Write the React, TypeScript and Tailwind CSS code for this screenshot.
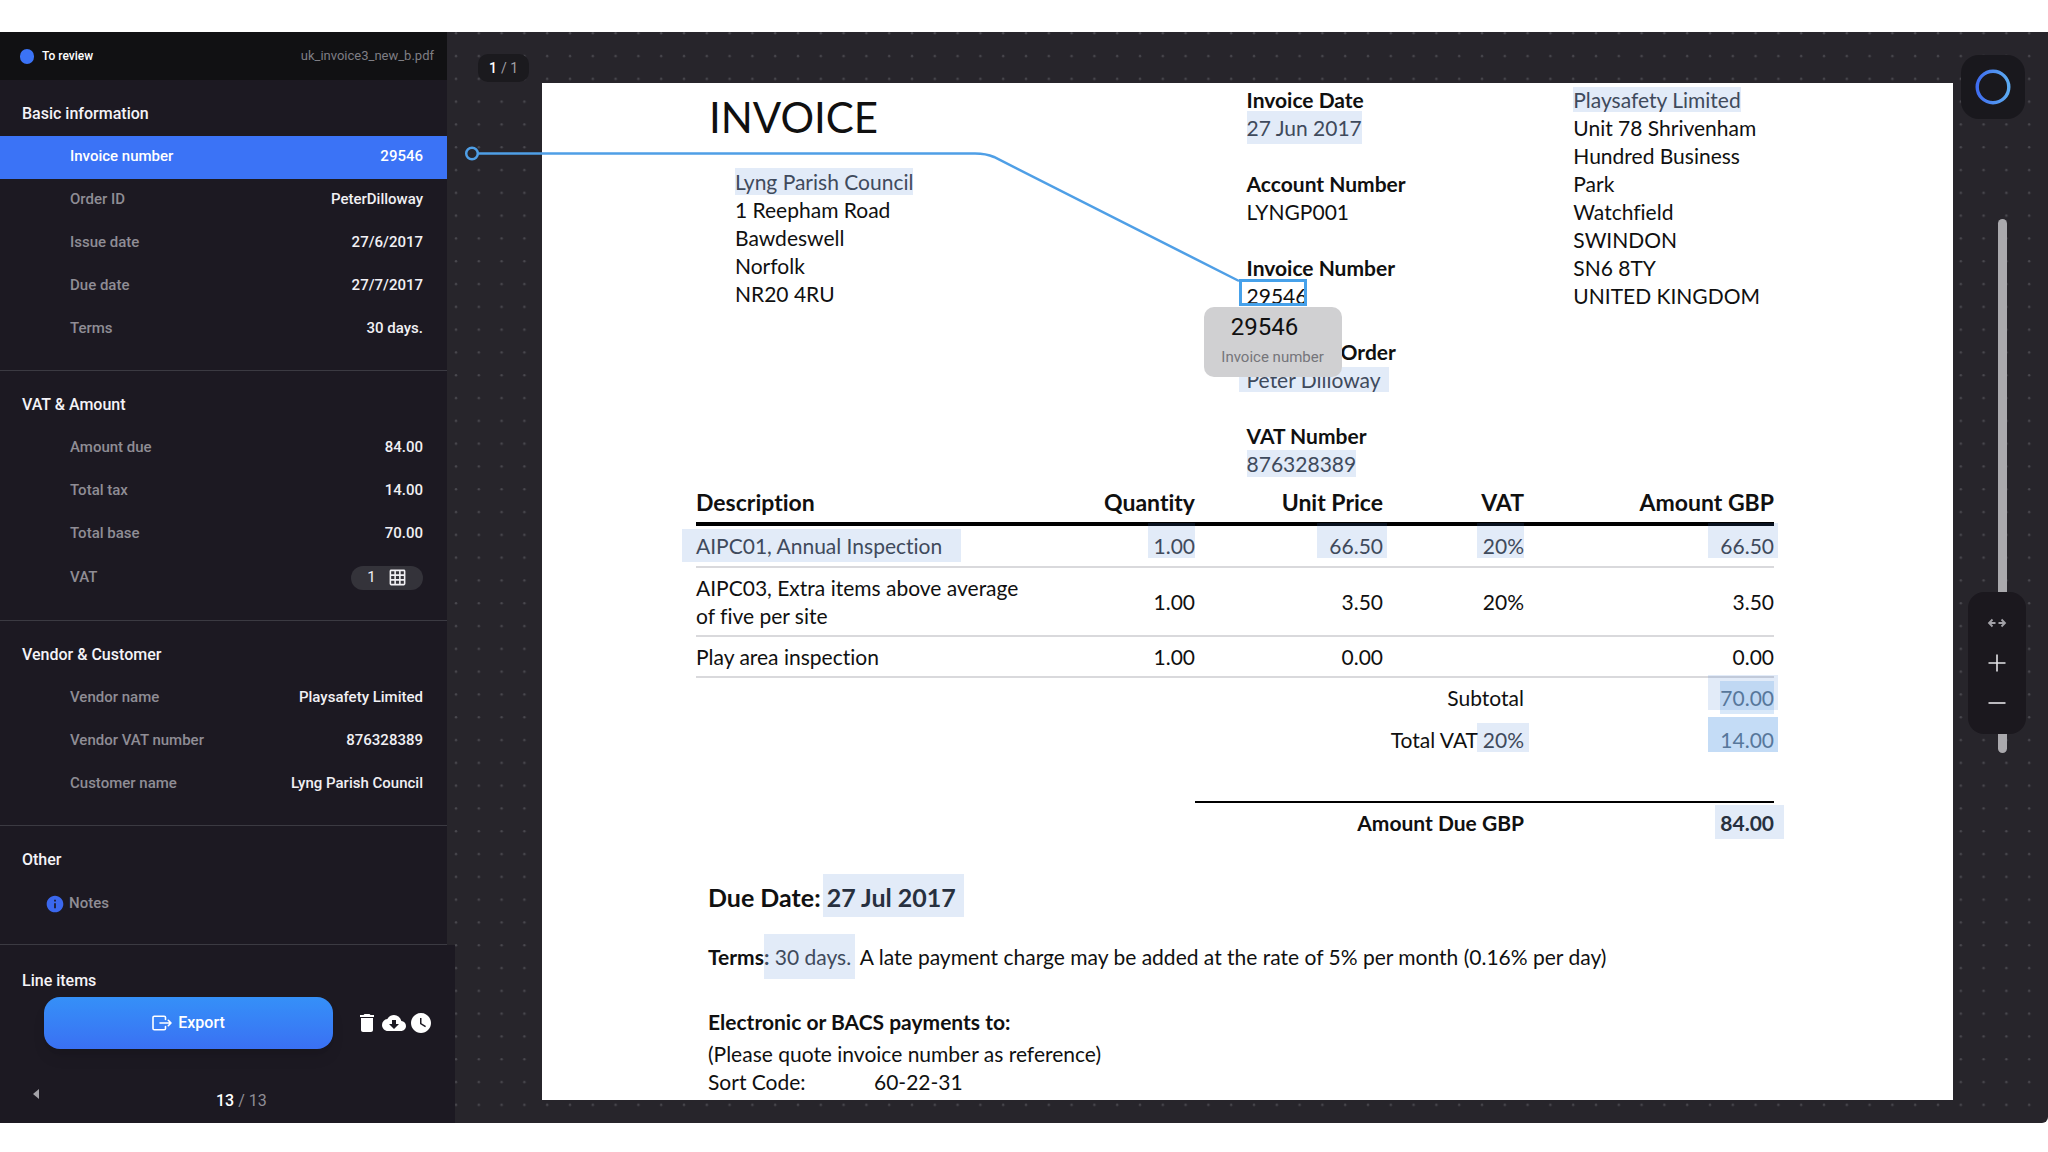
import { ReactNode } from 'react';
import { clsx } from 'clsx';
import {
  MdCloudDownload,
  MdDelete,
  MdGridOn,
  MdInfo,
  MdWatchLater,
} from 'react-icons/md';

type Field = { label: string; value: string; active?: boolean };

const basicFields: Field[] = [
  { label: 'Invoice number', value: '29546', active: true },
  { label: 'Order ID', value: 'PeterDilloway' },
  { label: 'Issue date', value: '27/6/2017' },
  { label: 'Due date', value: '27/7/2017' },
  { label: 'Terms', value: '30 days.' },
];

const amountFields: Field[] = [
  { label: 'Amount due', value: '84.00' },
  { label: 'Total tax', value: '14.00' },
  { label: 'Total base', value: '70.00' },
];

const partyFields: Field[] = [
  { label: 'Vendor name', value: 'Playsafety Limited' },
  { label: 'Vendor VAT number', value: '876328389' },
  { label: 'Customer name', value: 'Lyng Parish Council' },
];

const FieldRow = ({ label, value, active }: Field) => (
  <div
    className={clsx(
      'flex h-[43px] items-center justify-between pb-0.5 pl-[70px] pr-6 text-[15px] font-medium',
      active ? 'bg-[#3b73f6] text-white' : 'text-[#f1f0f4]'
    )}
  >
    <dt className={active ? 'text-white' : 'text-[#8f8d95]'}>{label}</dt>
    <dd>{value}</dd>
  </div>
);

const Section = ({
  title,
  children,
}: {
  title: string;
  children: ReactNode;
}) => (
  <section className="border-b border-[#3b3a42] pb-[19px]">
    <h2 className="flex h-14 items-center pl-[22px] pt-[11px] text-base font-medium text-[#f4f3f7]">
      {title}
    </h2>
    <dl>{children}</dl>
  </section>
);

const ExportIcon = () => (
  <svg
    width="20"
    height="16"
    viewBox="0 0 20 16"
    fill="none"
    stroke="currentColor"
    strokeWidth="1.6"
    strokeLinecap="round"
    strokeLinejoin="round"
  >
    <path d="M13.5 4.5V2.6a1.3 1.3 0 0 0-1.3-1.3H2.3A1.3 1.3 0 0 0 1 2.6v10.8a1.3 1.3 0 0 0 1.3 1.3h9.9a1.3 1.3 0 0 0 1.3-1.3v-1.9" />
    <path d="M8 8h11M16.3 5.3 19 8l-2.7 2.7" />
  </svg>
);

const Sidebar = () => (
  <aside className="z-10 flex w-[447px] shrink-0 flex-col rounded-bl-md bg-[#1c1922]">
    <header className="flex h-12 items-center bg-[#111113] pl-5 pr-[13px] text-[13px]">
      <span className="h-[15px] w-[14px] rounded-full bg-[#3b73f6]" />
      <span className="ml-2 text-xs font-medium text-white">To review</span>
      <span className="ml-auto text-[#7f7e84]">uk_invoice3_new_b.pdf</span>
    </header>
    <Section title="Basic information">
      {basicFields.map((field) => (
        <FieldRow key={field.label} {...field} />
      ))}
    </Section>
    <Section title="VAT & Amount">
      {amountFields.map((field) => (
        <FieldRow key={field.label} {...field} />
      ))}
      <div className="flex h-[45px] items-center justify-between pb-0.5 pl-[70px] pr-6 text-[15px]">
        <dt className="font-medium text-[#8f8d95]">VAT</dt>
        <dd>
          <button className="flex h-6 w-[72px] items-center justify-center gap-3 rounded-full bg-[#34333a] text-[#f1f0f4]">
            1
            <MdGridOn size={19} />
          </button>
        </dd>
      </div>
    </Section>
    <Section title="Vendor & Customer">
      {partyFields.map((field) => (
        <FieldRow key={field.label} {...field} />
      ))}
    </Section>
    <Section title="Other">
      <div className="flex h-[43px] items-center gap-1 pl-[45px] text-[15px] font-medium text-[#8f8d95]">
        <MdInfo size={20} className="text-[#3b68ee]" />
        <dt>Notes</dt>
      </div>
    </Section>
    <footer className="-mr-2 flex flex-1 flex-col bg-[#1c1922]">
      <h2 className="pl-[22px] pt-6 text-base font-medium text-[#f4f3f7]">
        Line items
      </h2>
      <div className="mt-1 flex items-center pl-11 pr-[22px]">
        <button className="flex h-[52px] w-[289px] items-center justify-center gap-[6px] rounded-2xl bg-linear-to-b from-[#3590f8] to-[#3a70f3] text-base font-medium text-white shadow-lg">
          <ExportIcon />
          Export
        </button>
        <div className="ml-auto flex items-center gap-[3px] text-white">
          <button aria-label="Delete">
            <MdDelete size={24} />
          </button>
          <button aria-label="Download">
            <MdCloudDownload size={24} />
          </button>
          <button aria-label="History">
            <MdWatchLater size={24} />
          </button>
        </div>
      </div>
      <div className="mt-auto flex items-start pb-[10px] pl-8 text-base">
        <button aria-label="Previous document">
          <svg width="8" height="10" viewBox="0 0 8 10">
            <path d="M7 0v10L1 5z" fill="#a3a2a8" />
          </svg>
        </button>
        <p className="ml-44 text-[#8f8d95]">
          <span className="font-medium text-white">13</span> / 13
        </p>
      </div>
    </footer>
  </aside>
);

/* Extracted value highlighted on the page */
const Mark = ({
  className,
  children,
}: {
  className?: string;
  children: ReactNode;
}) => (
  <mark className={clsx('bg-[#3a7bd0]/15 text-[#3f4a5c]', className)}>
    {children}
  </mark>
);

const InvoiceHead = () => (
  <div className="grid grid-cols-[538fr_327fr_380fr] pl-[167px] pt-[3px]">
    <div>
      <h1 className="pt-1 text-[42px] leading-[54px]">INVOICE</h1>
      <address className="pl-[26px] pt-6 not-italic">
        <Mark className="py-px">Lyng Parish Council</Mark>
        <br />
        1 Reepham Road
        <br />
        Bawdeswell
        <br />
        Norfolk
        <br />
        NR20 4RU
      </address>
    </div>
    <dl>
      <dt className="font-bold">Invoice Date</dt>
      <dd className="mb-7">
        <Mark className="py-1">27 Jun 2017</Mark>
      </dd>
      <dt className="font-bold">Account Number</dt>
      <dd className="mb-7">LYNGP001</dd>
      <dt className="font-bold">Invoice Number</dt>
      <dd className="relative mb-7">
        29546
        <span className="absolute -left-2 -top-[3px] h-[27px] w-[68px] border-[3px] border-[#46a1ea]" />
        <div
          role="tooltip"
          className="absolute -left-[43px] top-[25px] flex h-[70px] w-[138px] flex-col items-center rounded-[10px] bg-[#d0d0d2] pt-[6px] font-[Roboto,sans-serif]"
        >
          <span className="pr-4 text-2xl leading-7 text-[#111111]">29546</span>
          <span className="text-[15px] leading-8 text-[#75757a]">
            Invoice number
          </span>
        </div>
      </dd>
      <dt className="pl-[94px] font-bold">Order</dt>
      <dd className="mb-7">
        <Mark className="-ml-2 px-2">Peter Dilloway</Mark>
      </dd>
      <dt className="font-bold">VAT Number</dt>
      <dd>
        <Mark className="py-px">876328389</Mark>
      </dd>
    </dl>
    <address className="not-italic">
      <Mark>Playsafety Limited</Mark>
      <br />
      Unit 78 Shrivenham
      <br />
      Hundred Business
      <br />
      Park
      <br />
      Watchfield
      <br />
      SWINDON
      <br />
      SN6 8TY
      <br />
      UNITED KINGDOM
    </address>
  </div>
);

const InvoiceTable = () => (
  <div className="pl-[154px] pr-[179px]">
    <table className="w-full table-fixed border-separate border-spacing-0 text-right">
      <thead>
        <tr className="h-12 text-[23px]">
          <th className="border-b-4 border-black pt-1 text-left">
            Description
          </th>
          <th className="w-[160px] border-b-4 border-black pt-1">Quantity</th>
          <th className="w-[188px] border-b-4 border-black pt-1">
            Unit Price
          </th>
          <th className="w-[141px] border-b-4 border-black pt-1">VAT</th>
          <th className="w-[250px] border-b-4 border-black pt-1">
            Amount GBP
          </th>
        </tr>
      </thead>
      <tbody>
        <tr className="h-[42px]">
          <td className="border-b-2 border-[#d9d9dc] text-left">
            <Mark className="-ml-[14px] py-1 pl-[14px] pr-[19px]">
              AIPC01, Annual Inspection
            </Mark>
          </td>
          <td className="border-b-2 border-[#d9d9dc]">
            <Mark className="pl-[6px] pt-[10px]">1.00</Mark>
          </td>
          <td className="border-b-2 border-[#d9d9dc]">
            <Mark className="-mr-1 pl-3 pr-1 pt-[10px]">66.50</Mark>
          </td>
          <td className="border-b-2 border-[#d9d9dc]">
            <Mark className="pl-[6px] pt-[10px]">20%</Mark>
          </td>
          <td className="border-b-2 border-[#d9d9dc]">
            <Mark className="-mr-1 pl-3 pr-1 pt-[10px]">66.50</Mark>
          </td>
        </tr>
        <tr className="h-[69px]">
          <td className="border-b-2 border-[#d9d9dc] text-left">
            AIPC03, Extra items above average
            <br />
            of five per site
          </td>
          <td className="border-b-2 border-[#d9d9dc]">1.00</td>
          <td className="border-b-2 border-[#d9d9dc]">3.50</td>
          <td className="border-b-2 border-[#d9d9dc]">20%</td>
          <td className="border-b-2 border-[#d9d9dc]">3.50</td>
        </tr>
        <tr className="h-[41px]">
          <td className="border-b-2 border-[#d9d9dc] text-left">
            Play area inspection
          </td>
          <td className="border-b-2 border-[#d9d9dc]">1.00</td>
          <td className="border-b-2 border-[#d9d9dc]">0.00</td>
          <td className="border-b-2 border-[#d9d9dc]" />
          <td className="border-b-2 border-[#d9d9dc]">0.00</td>
        </tr>
      </tbody>
      <tfoot>
        <tr className="h-10">
          <td colSpan={4}>Subtotal</td>
          <td>
            <Mark className="-mr-1 pl-3 pr-1 pt-[10px]">
              <span className="bg-[#3a8be0]/20 py-1 text-[#57779b]">70.00</span>
            </Mark>
          </td>
        </tr>
        <tr className="h-[83px] align-top">
          <td colSpan={4} className="pt-2">
            Total VAT{' '}
            <Mark className="-ml-[6px] -mr-[5px] pl-[6px] pr-[5px] pt-1">
              20%
            </Mark>
          </td>
          <td className="pt-2">
            <mark className="-mr-1 bg-[#3a8be0]/30 pl-3 pr-1 pt-[10px] text-[#57779b]">
              14.00
            </mark>
          </td>
        </tr>
        <tr className="h-[42px] font-bold">
          <td colSpan={2} />
          <td colSpan={2} className="border-t-2 border-black">
            Amount Due GBP
          </td>
          <td className="border-t-2 border-black">
            <Mark className="-mr-[10px] pb-1 pl-[5px] pr-[10px] pt-[5px]">
              <span className="text-[#27303f]">84.00</span>
            </Mark>
          </td>
        </tr>
      </tfoot>
    </table>
  </div>
);

const InvoicePage = () => (
  <article className="min-w-0 flex-1 overflow-hidden bg-white font-[Lato,sans-serif] text-[21px] leading-7 text-[#101010] [font-variant-ligatures:none]">
    <InvoiceHead />
    <InvoiceTable />
    <div className="pl-[166px]">
      <p className="pt-[38px] text-[25px] font-bold leading-8">
        Due Date:{' '}
        <Mark className="-ml-1 pb-[5px] pl-1 pr-2 pt-2">
          <span className="text-[#27303f]">27 Jul 2017</span>
        </Mark>
      </p>
      <p className="pt-[30px]">
        <b>Terms</b>
        <Mark className="py-[10px] pr-1">
          <b>:</b> 30 days.
        </Mark>{' '}
        A late payment charge may be added at the rate of 5% per month (0.16%
        per day)
      </p>
      <p className="pt-[37px] font-bold">Electronic or BACS payments to:</p>
      <p className="pt-1">(Please quote invoice number as reference)</p>
      <p className="flex">
        <span className="w-[166px]">Sort Code:</span>60-22-31
      </p>
    </div>
  </article>
);

const DotGrid = () => (
  <svg className="absolute inset-0 h-full w-full" aria-hidden="true">
    <defs>
      <pattern
        id="dots"
        width="22.8"
        height="22.8"
        patternUnits="userSpaceOnUse"
      >
        <circle cx="9" cy="1.3" r="1.2" fill="#4a494f" />
      </pattern>
    </defs>
    <rect width="100%" height="100%" fill="url(#dots)" />
  </svg>
);

/* Leader from the selected field to its place on the page */
const Connector = () => (
  <svg
    className="pointer-events-none absolute left-0 top-0"
    width="800"
    height="260"
    fill="none"
    stroke="#4f9fe6"
    strokeWidth="2.5"
    aria-hidden="true"
  >
    <circle cx="25" cy="121.5" r="5.8" />
    <path d="M31 121.5H528Q539 121.5 547 125L792 249" />
  </svg>
);

const ZoomControls = () => (
  <div className="absolute bottom-[389px] right-[22px] flex h-[142px] w-[58px] flex-col items-center justify-center gap-4 rounded-2xl bg-[#1b181e]">
    <button aria-label="Fit width" className="text-[#a3a2a8]">
      <svg
        width="24"
        height="24"
        viewBox="0 0 24 24"
        fill="none"
        stroke="currentColor"
        strokeWidth="1.8"
      >
        <path d="M4 12h6.5M7.5 8.5 4 12l3.5 3.5M13.500 12H20M16.500 8.500 20 12l-3.500 3.500" />
      </svg>
    </button>
    <button aria-label="Zoom in" className="text-[#e4e3e7]">
      <svg
        width="24"
        height="24"
        viewBox="0 0 24 24"
        stroke="currentColor"
        strokeWidth="1.6"
      >
        <path d="M3.5 12h17M12 3.5v17" />
      </svg>
    </button>
    <button aria-label="Zoom out" className="text-[#e4e3e7]">
      <svg
        width="24"
        height="24"
        viewBox="0 0 24 24"
        stroke="currentColor"
        strokeWidth="1.6"
      >
        <path d="M3.5 12h17" />
      </svg>
    </button>
  </div>
);

const Viewer = () => (
  <main className="relative flex min-w-0 flex-1 rounded-br-md bg-[#27252b] pb-[23px] pt-[51px]">
    <DotGrid />
    <div className="relative z-10 w-[95px] shrink-0">
      <div className="-mt-[29px] ml-[31px] flex h-7 w-[51px] items-center justify-center gap-1 rounded-[10px] bg-[#1b1a1e] text-sm text-[#a09fa5]">
        <span className="font-medium text-white">1</span>/ 1
      </div>
    </div>
    <div className="relative flex min-w-0 flex-1">
      <InvoicePage />
    </div>
    <div className="w-[95px] shrink-0">
      <button
        aria-label="Assistant"
        className="relative -mt-7 ml-2 flex h-16 w-16 items-center justify-center rounded-[18px] bg-[#19181d]"
      >
        <svg width="36" height="36" viewBox="0 0 36 36" fill="none">
          <defs>
            <linearGradient id="ring" x1="0" y1="0" x2="1" y2="0">
              <stop offset="0" stopColor="#3f6df0" />
              <stop offset="1" stopColor="#5cabf2" />
            </linearGradient>
          </defs>
          <circle
            cx="18"
            cy="18"
            r="15.8"
            stroke="url(#ring)"
            strokeWidth="3.4"
          />
        </svg>
      </button>
    </div>
    <div className="absolute bottom-[370px] right-[41px] top-[187px] w-[9px] rounded-full bg-[#aaa9ad]" />
    <ZoomControls />
    <Connector />
  </main>
);

const App = () => (
  <div className="flex min-h-screen flex-col bg-white pb-[29px] pt-8 font-[Roboto,sans-serif]">
    <div className="flex flex-1">
      <Sidebar />
      <Viewer />
    </div>
  </div>
);

export default App;
